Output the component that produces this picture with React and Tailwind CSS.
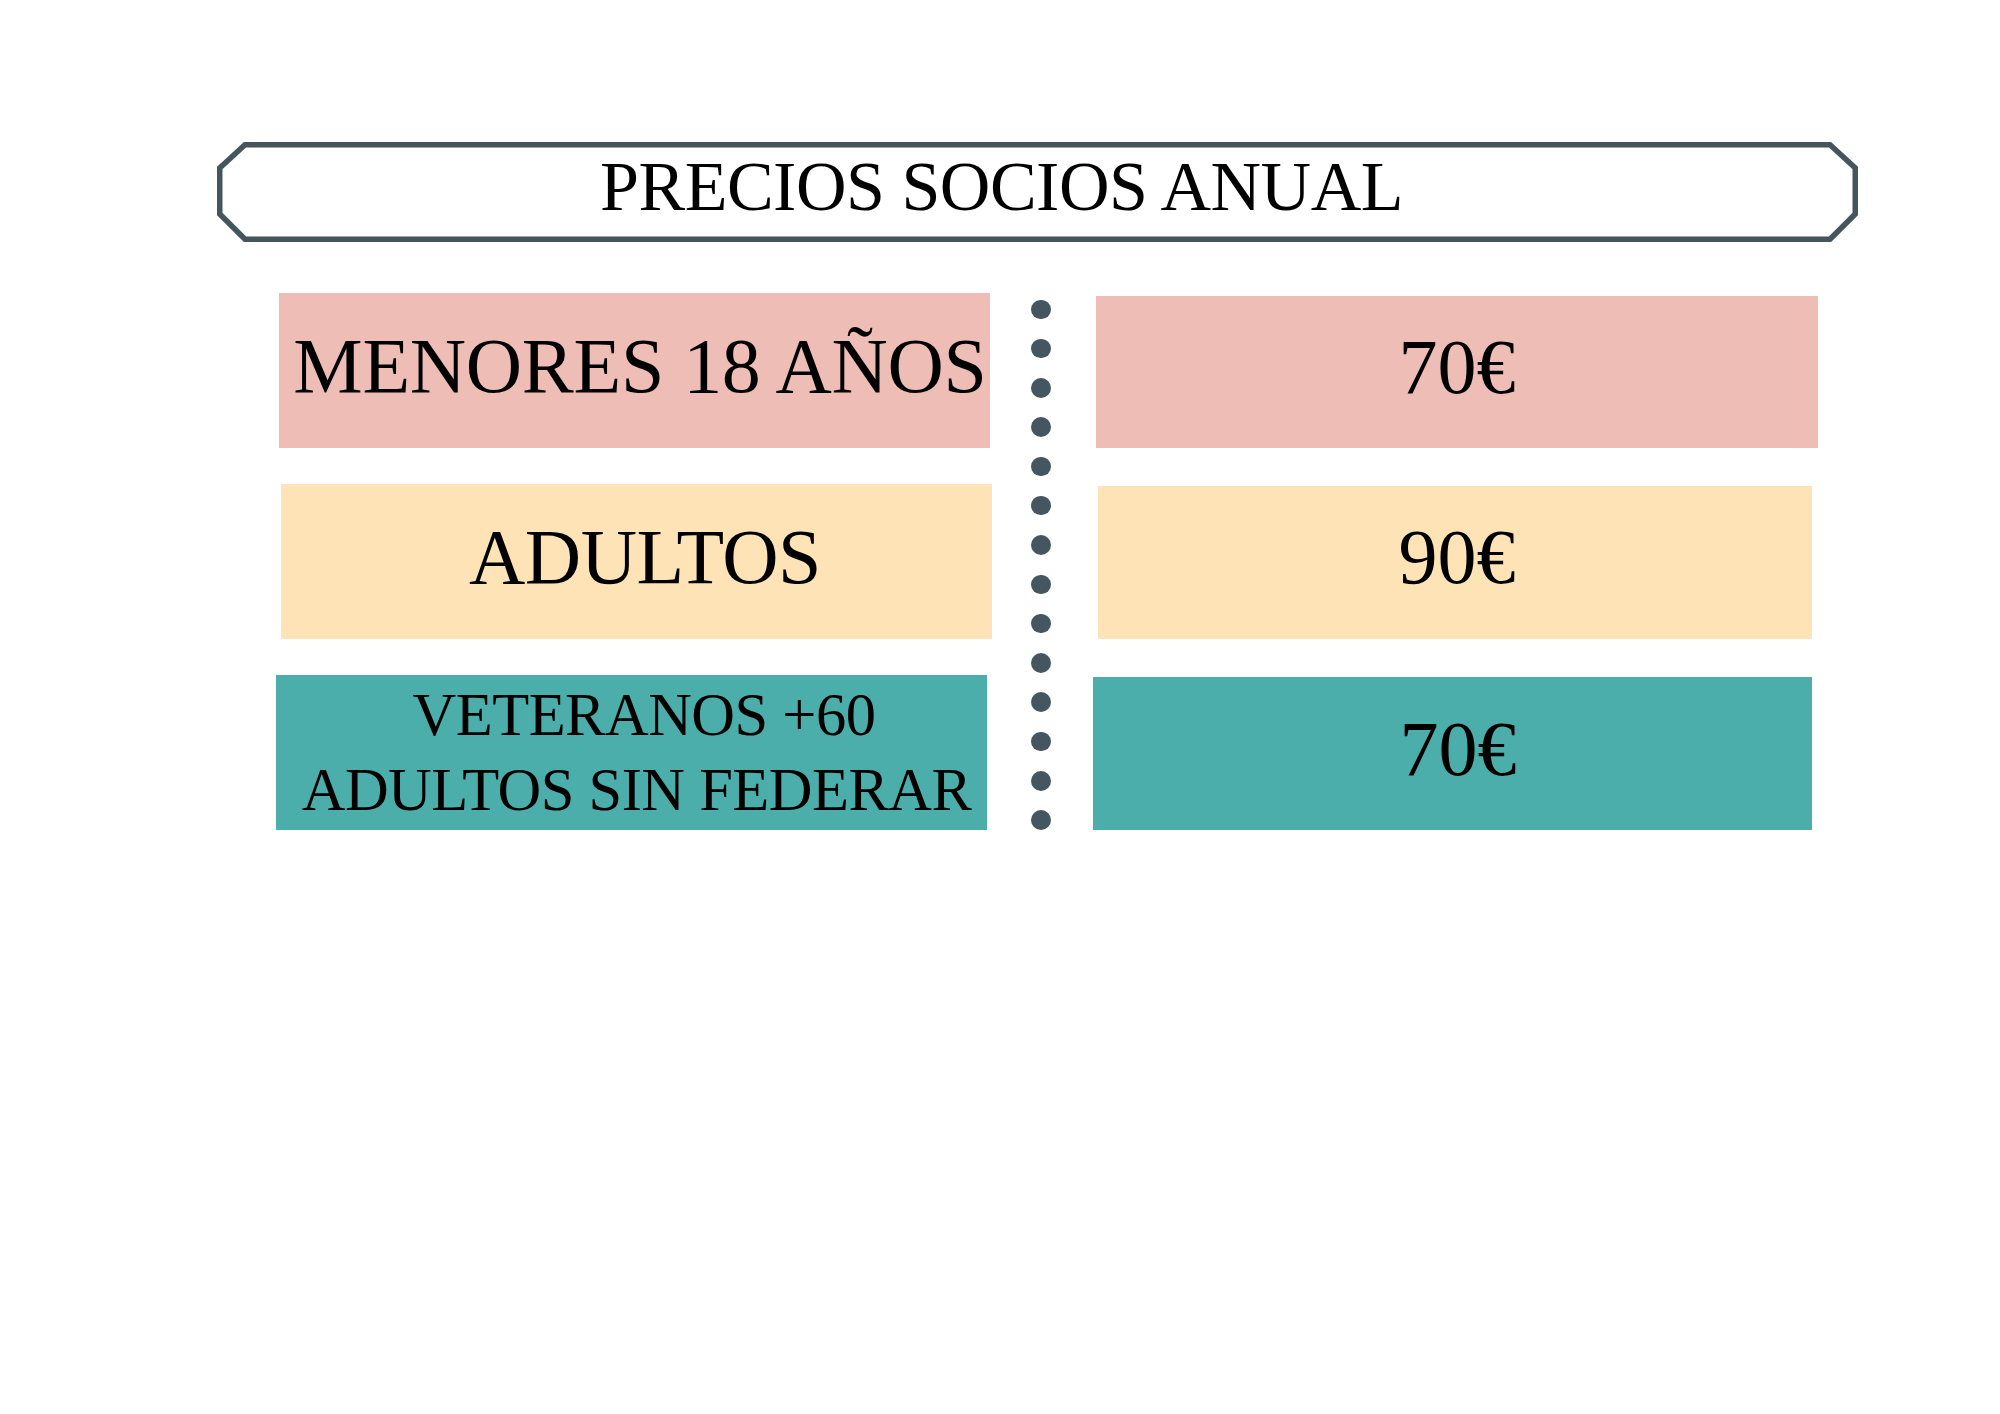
import React from "react";

const serif = "font-['Liberation_Serif','Times_New_Roman',serif]";

function Dots() {
  const dots = Array.from({ length: 14 });
  return (
    <div className="mt-[6.5px] flex flex-col items-center gap-[19.8px]">
      {dots.map((_, i) => (
        <div key={i} className="w-[20px] h-[19.5px] shrink-0 rounded-full bg-[#44565f]" />
      ))}
    </div>
  );
}

export default function App() {
  return (
    <div className={`min-h-[1414px] w-[2000px] bg-white text-black ${serif}`}>
      <div className="pt-[142px] pl-[217px]">
        <div className="relative w-[1641px] h-[100px] flex items-center justify-center pb-[10px] pr-[72px]">
          <svg
            className="absolute inset-0"
            width="1641"
            height="100"
            viewBox="0 0 1641 100"
          >
            <polygon
              points="28,2.75 1613,2.75 1638.25,26 1638.25,72 1613,97.25 28,97.25 2.75,72 2.75,26"
              fill="none"
              stroke="#44555d"
              strokeWidth="5.5"
            />
          </svg>
          <span className="relative text-[70px] leading-none tracking-[-0.5px] whitespace-nowrap">
            PRECIOS SOCIOS ANUAL
          </span>
        </div>
      </div>

      <div className="flex pl-[276px] pt-[51px]">
        <div className="flex flex-col gap-[36px] w-[716px]">
          <div className="ml-[3px] w-[711px] h-[155px] bg-[#edbdb6] flex items-center justify-center pb-[10px] pl-[11px]">
            <span className="text-[78px] leading-none tracking-[-0.3px] whitespace-nowrap">
              MENORES 18 AÑOS
            </span>
          </div>
          <div className="ml-[5px] w-[711px] h-[155px] bg-[#fde3b6] flex items-center justify-center pb-[10px] pl-[17px]">
            <span className="text-[78px] leading-none tracking-[-0.5px]">ADULTOS</span>
          </div>
          <div className="w-[711px] h-[155px] bg-[#4caeaa] flex flex-col items-center justify-center pb-[2px]">
            <span className="pl-[25px] text-[60.5px] leading-[75px] tracking-[-0.5px] whitespace-nowrap">
              VETERANOS +60
            </span>
            <span className="pl-[10px] text-[60.5px] leading-[75px] tracking-[-0.5px] whitespace-nowrap">
              ADULTOS SIN FEDERAR
            </span>
          </div>
        </div>

        <div className="ml-[39px] mr-[42px]">
          <Dots />
        </div>

        <div className="flex flex-col">
          <div className="mt-[3px] ml-[3px] w-[722px] h-[152px] bg-[#edbdb6] flex items-center justify-center pb-[10px]">
            <span className="text-[78px] leading-none">70€</span>
          </div>
          <div className="mt-[38px] ml-[5px] w-[714px] h-[153px] bg-[#fde3b6] flex items-center justify-center pb-[12px] pl-[4px]">
            <span className="text-[78px] leading-none">90€</span>
          </div>
          <div className="mt-[38px] w-[719px] h-[153px] bg-[#4caeaa] flex items-center justify-center pb-[10px] pl-[11px]">
            <span className="text-[78px] leading-none">70€</span>
          </div>
        </div>
      </div>
    </div>
  );
}
